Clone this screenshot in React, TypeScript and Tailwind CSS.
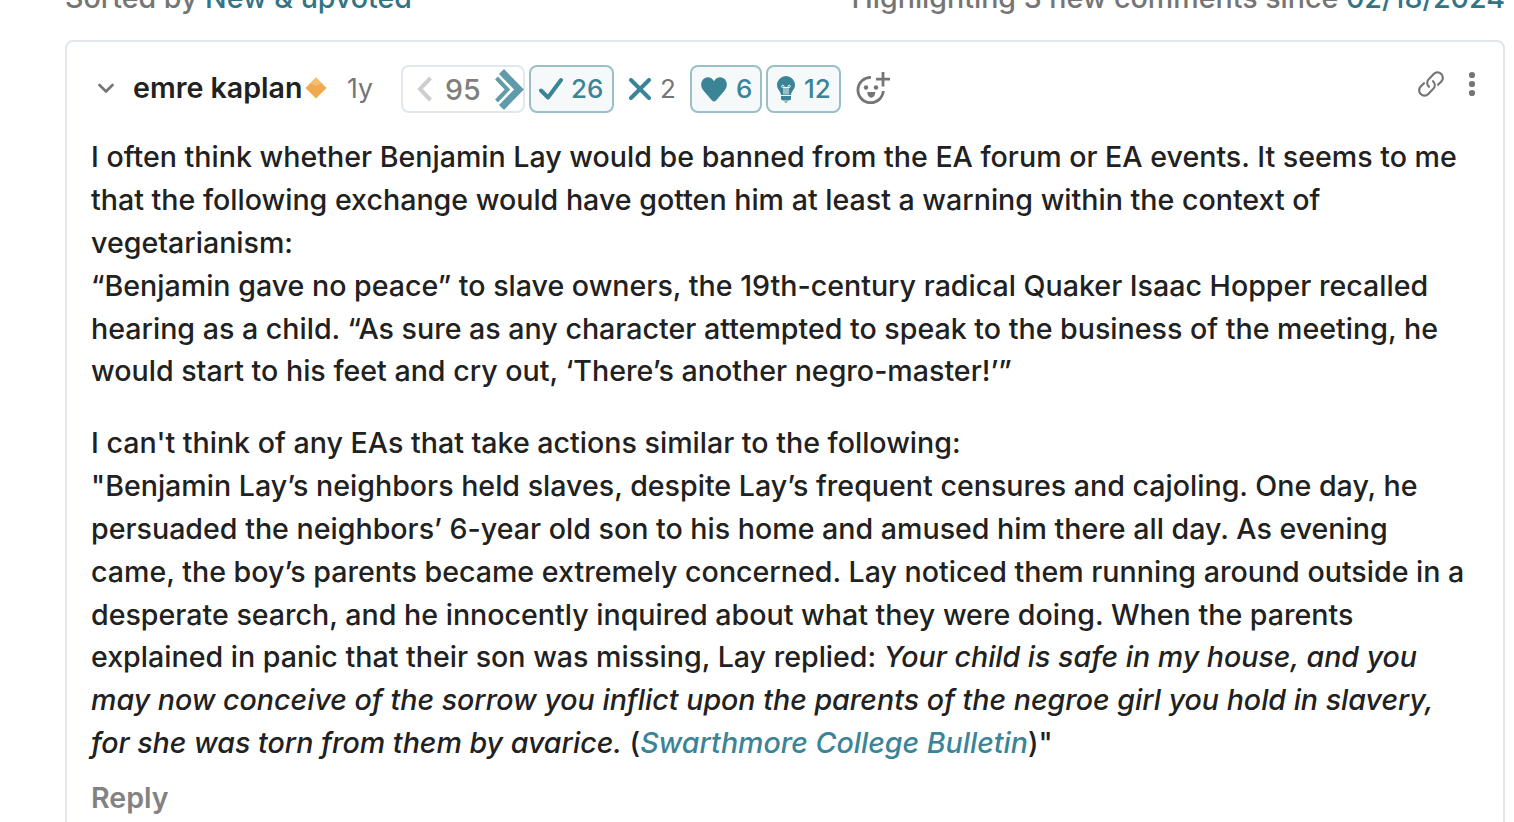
import type { ReactNode } from "react";

interface ReactionProps {
  icon: ReactNode;
  count: number;
  className: string;
}

function Reaction({ icon, count, className }: ReactionProps) {
  return (
    <button
      className={`flex h-12 items-center rounded-lg border-2 border-[#9abfc8] bg-[#f5f9fa] text-[26px] text-[#3b8498] ${className}`}
    >
      {icon}
      <span className="-mt-[2px]">{count}</span>
    </button>
  );
}

function VoteBox() {
  return (
    <div className="flex h-12 w-[124px] items-center rounded-lg border-2 border-[#e2e6ed] pl-[14px]">
      <svg width="16" height="26" viewBox="0 0 16 26" fill="none" stroke="#cecece" strokeWidth="4">
        <path d="M13.5 2 3 13l10.500 11" />
      </svg>
      <span className="ml-[12px] mt-[3px] w-[36px] text-[28.600px] leading-none text-[#7f7f7f]">95</span>
      {/* Strong upvote */}
      <svg className="-mr-2 ml-[12px] shrink-0" width="32" height="42" viewBox="0 0 32 42" fill="none" stroke="#5f9bab">
        <path d="M3.500 10 14.500 21.500 3.500 33" strokeWidth="4" />
        <path d="M8.500 3.500 26 21.500 8.500 39.500" strokeWidth="7" />
      </svg>
    </div>
  );
}

function CheckIcon() {
  return (
    <svg className="ml-[8px] mr-[8px]" width="24" height="24" viewBox="0 0 24 24" fill="none" stroke="#3b8498" strokeWidth="4" strokeLinecap="round" strokeLinejoin="round">
      <path d="M2 13.500l7 7L22 3" />
    </svg>
  );
}

function HeartIcon() {
  return (
    <svg className="ml-[9px] mr-[9px]" width="26" height="25" viewBox="0 0 26 25" fill="#3b8498">
      <path d="M13 4.200C10.500-.8 4.500-.8 1.800 2.700-.8 6.200-.2 10.500 3 14.200L11 23.500q2 2 4 0L23 14.200C26.200 10.500 26.800 6.200 24.200 2.700 21.500-.8 15.500-.8 13 4.200Z" />
    </svg>
  );
}

function BulbIcon() {
  return (
    <svg className="ml-[9px] mr-[9px]" width="18" height="27" viewBox="0 0 18 27" fill="#3b8498">
      <path d="M9 0a9 9 0 0 1 9 9c0 4.500-3.700 6-4 10H4C3.700 15 0 13.500 0 9a9 9 0 0 1 9-9Z" />
      <path d="M4 20h10v3.500l-2 1H6l-2-1ZM7 25.500h4l-2 1.500Z" />
      <path d="M7 18.500v-7H5.500A1.200 1.200 0 1 1 7 10.300v1.200h4v-1.200a1.200 1.200 0 1 1 1.500 1.200H11v7M9 12v6.500" fill="none" stroke="#f5f9fa" strokeWidth="1" />
    </svg>
  );
}

function AddReactionIcon() {
  return (
    <svg width="34" height="34" viewBox="0 0 34 34" fill="none" stroke="#757575" strokeWidth="2.800">
      <path d="M15 5.300A12.700 12.700 0 1 0 27.300 19M27 0v14.500M20 7.200h14" />
      <g fill="#757575" stroke="none">
        <circle cx="10" cy="15.500" r="2.200" />
        <circle cx="20" cy="15.500" r="2.200" />
        <path d="M11.300 20h8c0 7.500-8 7.500-8 0Z" />
      </g>
    </svg>
  );
}

function CommentHeader() {
  return (
    <header className="flex h-12 items-center whitespace-nowrap">
      <svg className="ml-[7px] -mt-px" width="16" height="11" viewBox="0 0 16 11" fill="none" stroke="#757575" strokeWidth="2.600" strokeLinecap="round" strokeLinejoin="round">
        <path d="M1.500 2 8 8.500 14.500 2" />
      </svg>
      <div className="-mt-[2px] ml-[19px] flex w-[268px] items-center">
        <span className="w-[170px] text-[28.600px] font-semibold text-[#212121]">emre kaplan</span>
        <svg className="ml-[2px] shrink-0" width="22" height="22" viewBox="0 0 22 22">
          <path d="M11 0.500 21.500 11 11 21.500 0.500 11Z" fill="#f0a94f" />
          <path d="M11 .5 17 6.500 11 9 5 6.500Z" fill="#f3bf6e" />
        </svg>
        <span className="ml-[20px] mt-[2px] text-[26.600px] font-normal text-[#757575]">1y</span>
      </div>
      <div className="flex items-center">
        <VoteBox />
        <Reaction className="ml-[4px] w-[85px]" icon={<CheckIcon />} count={26} />
        <button className="flex w-[76px] items-center text-[26px] text-[#757575]">
          <svg className="ml-[15px] mr-[9px]" width="22" height="22" viewBox="0 0 22 22" stroke="#3b8498" strokeWidth="4" strokeLinecap="round">
            <path d="M2 2l18 18M20 2 2 20" />
          </svg>
          <span className="-mt-[2px] font-normal">2</span>
        </button>
        <Reaction className="w-[72px]" icon={<HeartIcon />} count={6} />
        <Reaction className="ml-[4px] mr-[15px] w-[75px]" icon={<BulbIcon />} count={12} />
        <AddReactionIcon />
      </div>
      <div className="-mt-[10px] ml-auto mr-[3px] flex items-center gap-[24px]">
        <svg width="26" height="26" viewBox="0 0 26 26" fill="none" stroke="#757575" strokeWidth="2.200" strokeLinecap="round">
          <path d="M11 15.800a5.300 5.300 0 0 1-.6-7.200l5.300-5.600a5.300 5.300 0 0 1 7.600 7.500l-3.300 3.300" />
          <path d="M15 10.200a5.300 5.300 0 0 1 .6 7.200l-5.300 5.600A5.300 5.300 0 0 1 2.700 15.500L6 12.200" />
        </svg>
        <svg width="8" height="26" viewBox="0 0 8 26" fill="#757575">
          <circle cx="4" cy="4" r="3.100" />
          <circle cx="4" cy="13" r="3.100" />
          <circle cx="4" cy="22" r="3.100" />
        </svg>
      </div>
    </header>
  );
}

export default function App() {
  return (
    <main className="h-[822px] w-[1514px] overflow-hidden bg-white pl-[65px] font-['Inter',sans-serif] font-medium">
      <div className="flex h-10 w-[1440px] justify-between whitespace-nowrap text-[28.600px] leading-[42px] text-[#757575]">
        <p className="-mt-[23px]">
          Sorted by <a className="text-[#327486]">New &amp; upvoted</a>
        </p>
        <p className="-mt-[23px]">
          Highlighting 3 new comments since <a className="text-[#327486]">02/18/2024</a>
        </p>
      </div>
      <article className="h-[800px] w-[1440px] rounded-lg border-2 border-[#e2e6ed] px-6 pt-[23px]">
        <CommentHeader />
        <div className="mt-[22.900px] whitespace-nowrap text-[28.600px] leading-[42.900px] text-[#212121]">
          <p>
            I often think whether Benjamin Lay would be banned from the EA forum or EA events. It seems to me<br />
            that the following exchange would have gotten him at least a warning within the context of<br />
            vegetarianism:<br />
            “Benjamin gave no peace” to slave owners, the 19th-century radical Quaker Isaac Hopper recalled<br />
            hearing as a child. “As sure as any character attempted to speak to the business of the meeting, he<br />
            would start to his feet and cry out, ‘There’s another negro-master!’”
          </p>
          <p className="mt-[28.600px]">
            I can't think of any EAs that take actions similar to the following:<br />
            "Benjamin Lay’s neighbors held slaves, despite Lay’s frequent censures and cajoling. One day, he<br />
            persuaded the neighbors’ 6-year old son to his home and amused him there all day. As evening<br />
            came, the boy’s parents became extremely concerned. Lay noticed them running around outside in a<br />
            desperate search, and he innocently inquired about what they were doing. When the parents<br />
            explained in panic that their son was missing, Lay replied: <em>Your child is safe in my house, and you<br />
            may now conceive of the sorrow you inflict upon the parents of the negroe girl you hold in slavery,<br />
            for she was torn from them by avarice.</em> (<em className="text-[#3b8498]">Swarthmore College Bulletin</em>)"
          </p>
        </div>
        <button className="mt-[12px] block text-[28.600px] font-semibold text-[#828282]">Reply</button>
      </article>
    </main>
  );
}
